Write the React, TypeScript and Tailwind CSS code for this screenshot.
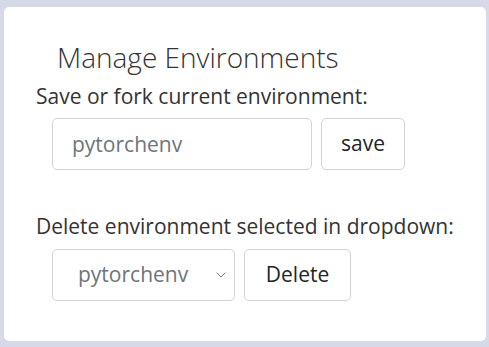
import { ChevronDown } from 'lucide-react'

export default function App() {
  return (
    <div className="min-h-[347px] w-[489px] bg-[#d5d9e8] pt-[7px] pl-[4px] font-['Open_Sans',sans-serif]">
      <div className="h-[334px] w-[482px] rounded-[5px] bg-white pt-[33px] pl-[32px]">
        <h1 className="ml-[21px] text-[28px] font-light leading-[34px] text-[#333]">
          Manage Environments
        </h1>
        <p className="mt-[8px] text-[21px] leading-[28px] text-[#333]">Save or fork current environment:</p>
        <div className="mt-[8px] ml-[16px] flex gap-[9px]">
          <input
            defaultValue="pytorchenv"
            className="h-[52px] w-[260px] rounded-[5px] border border-[#d4d4d4] px-[19px] text-[21px] text-[#6c757d] outline-none"
          />
          <button className="h-[52px] w-[84px] rounded-[5px] border border-[#d4d4d4] bg-white text-[21px] font-medium text-[#212529]">
            save
          </button>
        </div>
        <p className="mt-[42px] text-[21px] leading-[28px] text-[#333]">
          Delete environment selected in dropdown:
        </p>
        <div className="mt-[9px] ml-[16px] flex gap-[9px]">
          <div className="relative flex h-[52px] w-[183px] items-center rounded-[5px] border border-[#d4d4d4] pl-[25px] text-[21px] text-[#6c757d]">
            pytorchenv
            <ChevronDown size={16} strokeWidth={1.3} className="absolute right-[5px] text-[#666]" />
          </div>
          <button className="h-[52px] w-[107px] rounded-[5px] border border-[#d4d4d4] bg-white text-[21px] font-medium text-[#212529]">
            Delete
          </button>
        </div>
      </div>
    </div>
  )
}
